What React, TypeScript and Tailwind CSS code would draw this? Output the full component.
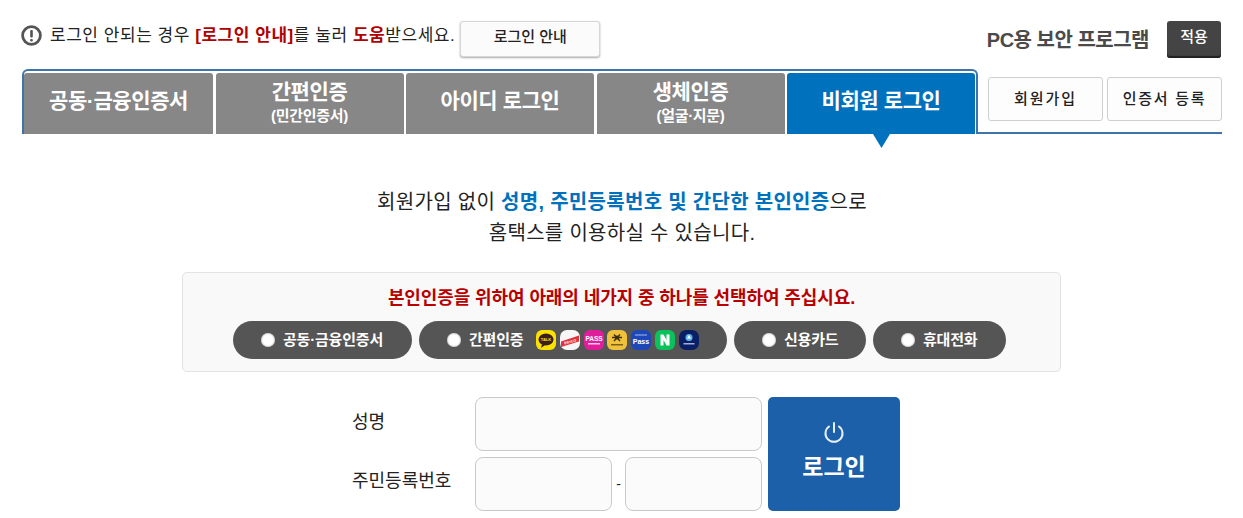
const font = { fontFamily: '"Liberation Sans", "Noto Sans CJK KR", sans-serif' };

const Tab = ({ title, sub, active, className }: { title: string; sub?: string; active?: boolean; className: string }) => (
  <div
    className={`relative flex flex-col items-center justify-start rounded-t-[3px] text-white ${active ? 'bg-[#0071bc]' : 'bg-[#878787]'} ${sub ? 'pt-[5px]' : 'pt-[14px]'} ${className}`}
  >
    <div className="text-[21px] font-bold leading-[28px] tracking-[-0.4px]">{title}</div>
    {sub && <div className="text-[15px] font-bold leading-[19px] tracking-[-0.3px]">{sub}</div>}
    {active && (
      <svg className="absolute left-[86px] top-[61px]" width="17" height="14" viewBox="0 0 17 14">
        <path d="M0 0H17L8.5 14Z" fill="#0071bc" />
      </svg>
    )}
  </div>
);

const Radio = () => <span className="h-[14px] w-[14px] rounded-full bg-white shadow-[inset_0_0_2px_#888]" />;

const Pill = ({ label, className, children }: { label: string; className: string; children?: React.ReactNode }) => (
  <div className={`flex h-[38px] items-center rounded-[19px] bg-[#555555] pl-[28px] text-[15px] font-bold text-white ${className}`}>
    <Radio />
    <span className="ml-[8px] tracking-[-0.2px]">{label}</span>
    {children}
  </div>
);

const AuthIcons = () => (
  <div className="ml-[13px] flex gap-[3.7px]">
    <svg width="20" height="20" viewBox="0 0 20 20">
      <rect width="20" height="20" rx="6" fill="#fae100" />
      <ellipse cx="10" cy="9.5" rx="7.5" ry="6" fill="#3c1e1e" />
      <path d="M6 14l-1 4 4-3z" fill="#3c1e1e" />
      <text x="10" y="11" fontSize="4" fontWeight="700" textAnchor="middle" fill="#fae100">TALK</text>
    </svg>
    <svg width="20" height="20" viewBox="0 0 20 20">
      <rect width="20" height="20" rx="7" fill="#f6f6f6" />
      <path d="M1 11.500 19 5.500v6L1 17z" fill="#e0333c" />
      <text x="10" y="13" fontSize="3.600" fontWeight="700" textAnchor="middle" fill="#fff" transform="rotate(-16 10 11)">PAYCO</text>
    </svg>
    <svg width="20" height="20" viewBox="0 0 20 20">
      <rect width="20" height="20" rx="6" fill="#e01e9c" />
      <text x="10" y="10.500" fontSize="6.500" fontWeight="700" textAnchor="middle" fill="#fff">PASS</text>
      <rect x="4" y="13" width="12" height="1.500" fill="#f9c6e6" />
    </svg>
    <svg width="20" height="20" viewBox="0 0 20 20">
      <rect width="20" height="20" rx="6" fill="#f0c23c" />
      <path d="M7 4.500 13 11M13 4.500 7 11M5 7.500h10" stroke="#3a2c10" strokeWidth="1.300" />
      <circle cx="10" cy="7.500" r="2" fill="#3a2c10" />
      <rect x="4" y="14" width="12" height="1.500" fill="#7a6020" />
    </svg>
    <svg width="20" height="20" viewBox="0 0 20 20">
      <rect width="20" height="20" rx="6" fill="#1e47b8" />
      <rect x="4" y="4.500" width="12" height="1" fill="#a9b9ea" />
      <text x="10" y="13.500" fontSize="7" fontWeight="700" textAnchor="middle" fill="#fff">Pass</text>
    </svg>
    <svg width="20" height="20" viewBox="0 0 20 20">
      <rect width="20" height="20" rx="6" fill="#0bc15c" />
      <path d="M5.500 4.500h3l3 5.500V4.500h3v11h-3l-3-5.500v5.500h-3z" fill="#fff" />
    </svg>
    <svg width="20" height="20" viewBox="0 0 20 20">
      <rect width="20" height="20" rx="7" fill="#0b1f66" />
      <circle cx="10" cy="7.500" r="3.500" fill="#5fb4e6" />
      <path d="M8 8.500 10 5l2 3.500z" fill="#fff" />
      <rect x="4.500" y="13" width="11" height="1.500" fill="#9fb0dd" />
    </svg>
  </div>
);

const inputCls = 'h-[54px] rounded-[8px] border border-[#c9c9c9] bg-[#fbfbfb]';

export default function App() {
  return (
    <div className="h-[518px] w-[1243px] overflow-hidden bg-white pl-[22px] text-[#222]" style={font}>
      <div className="w-[1200px]">
        {/* top row */}
        <div className="flex h-[69px] justify-between">
          <div className="flex items-start pt-[21px]">
            <svg className="ml-[-1px] mt-[4px]" width="21" height="21" viewBox="0 0 21 21">
              <circle cx="10.500" cy="10.500" r="8.900" fill="#fff" stroke="#555" strokeWidth="2.800" />
              <rect x="9.200" y="5" width="2.600" height="7.500" rx="1" fill="#555" />
              <rect x="9.200" y="14" width="2.600" height="2.500" rx="1" fill="#555" />
            </svg>
            <div className="ml-[8px] mt-[3px] text-[17px] leading-[24px] tracking-[0.54px]">
              로그인 안되는 경우 <b className="text-[#b00000]">[로그인 안내]</b>를 눌러 <b className="text-[#b00000]">도움</b>받으세요.
            </div>
            <div className="ml-[5px] flex h-[36px] w-[140px] items-center justify-center rounded-[3px] border border-[#d6d6d6] bg-[#fbfbfb] pb-[3px] text-[15px] font-medium shadow-[0_1px_2px_#aaa]">
              로그인 안내
            </div>
          </div>
          <div className="flex items-start pr-[1px] pt-[21px]">
            <div className="mr-[18px] mt-[6px] text-[20px] font-bold leading-[26px] tracking-[-0.5px] text-[#4a4a4a]">PC용 보안 프로그램</div>
            <div className="flex h-[37px] w-[54px] items-center justify-center rounded-[3px] bg-[#444] pb-[4px] text-[15px] font-medium text-white shadow-[inset_0_-2px_1px_#222]">
              적용
            </div>
          </div>
        </div>

        {/* tabs */}
        <div className="flex h-[65px]">
          <div className="flex h-[65px] w-[956px] gap-[2.500px] rounded-t-[6px] border-x-2 border-t-2 border-[#3f74a8] px-0 pt-[2px]">
            <Tab title="공동·금융인증서" className="w-[189px]" />
            <Tab title="간편인증" sub="(민간인증서)" className="w-[188px]" />
            <Tab title="아이디 로그인" className="w-[188px]" />
            <Tab title="생체인증" sub="(얼굴·지문)" className="w-[188px]" />
            <Tab title="비회원 로그인" active className="w-[188px]" />
          </div>
          <div className="flex h-[65px] flex-1 justify-end gap-[4px] border-b-2 border-[#3f74a8] pt-[8px]">
            <div className="flex h-[44px] w-[115px] items-center justify-center rounded-[3px] border border-[#cfcfcf] bg-[#fdfdfd] text-[15px] font-medium tracking-[2px]">회원가입</div>
            <div className="flex h-[44px] w-[115px] items-center justify-center rounded-[3px] border border-[#cfcfcf] bg-[#fdfdfd] text-[15px] font-medium tracking-[1.7px]">인증서 등록</div>
          </div>
        </div>

        {/* intro */}
        <div className="pt-[53px] text-center text-[20px] leading-[31px] tracking-[0.3px] text-[#222]">
          <div>
            회원가입 없이 <b className="font-bold text-[#0071bc]">성명, 주민등록번호 및 간단한 본인인증</b>으로
          </div>
          <div>홈택스를 이용하실 수 있습니다.</div>
        </div>

        {/* method box */}
        <div className="ml-[160px] mt-[23px] h-[100px] w-[879px] rounded-[5px] border border-[#e2e2e2] bg-[#f9f9f9] pt-[13px]">
          <div className="text-center text-[18px] font-bold leading-[24px] tracking-[-0.1px] text-[#b80000]">
            본인인증을 위하여 아래의 네가지 중 하나를 선택하여 주십시요.
          </div>
          <div className="mt-[11px] flex gap-[7px] pl-[50px]">
            <Pill label="공동·금융인증서" className="w-[179px]" />
            <Pill label="간편인증" className="w-[308px]">
              <AuthIcons />
            </Pill>
            <Pill label="신용카드" className="w-[132px]" />
            <Pill label="휴대전화" className="w-[133px]" />
          </div>
        </div>

        {/* login form */}
        <div className="ml-[330px] mt-[25px] flex">
          <div className="w-[123px] text-[18px] leading-[26px]">
            <div className="flex h-[54px] items-center pb-[5px]">성명</div>
            <div className="mt-[6px] flex h-[54px] items-center pb-[6px]">주민등록번호</div>
          </div>
          <div className="flex w-[287px] flex-col gap-[6px]">
            <div className={`${inputCls} w-full`} />
            <div className="flex items-center justify-between">
              <div className={`${inputCls} w-[137px]`} />
              <span className="text-[14px]">-</span>
              <div className={`${inputCls} w-[137px]`} />
            </div>
          </div>
          <div className="ml-[6px] flex h-[114px] w-[132px] flex-col items-center justify-center rounded-[5px] bg-[#1c60a9] pb-[5px] text-white">
            <svg width="24" height="24" viewBox="0 0 24 24" fill="none" stroke="#e6eef7" strokeWidth="2" strokeLinecap="round">
              <path d="M12 3v9" />
              <path d="M7 6.500a8.500 8.500 0 1 0 10 0" />
            </svg>
            <div className="mt-[7px] text-[23px] font-bold leading-[32px]">로그인</div>
          </div>
        </div>
      </div>
    </div>
  );
}
